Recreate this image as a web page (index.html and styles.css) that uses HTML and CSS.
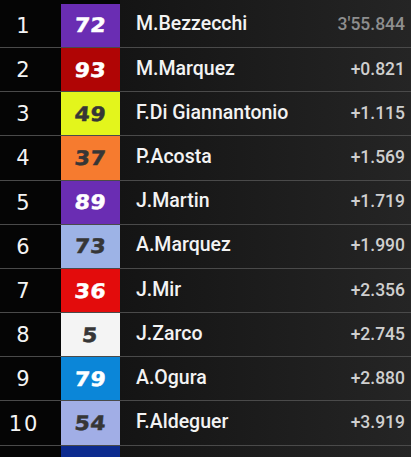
FILE: index.html
```html
<!DOCTYPE html>
<html lang="en">
<head>
<meta charset="utf-8">
<title>Race results</title>
<link rel="stylesheet" href="styles.css">
</head>
<body>
<ol class="standings">
  <li class="row"><span class="pos">1</span><span class="num c-purple"><b>72</b></span><span class="rider">M.Bezzecchi</span><span class="gap gap-lead">3'55.844</span></li>
  <li class="row"><span class="pos">2</span><span class="num c-darkred"><b>93</b></span><span class="rider">M.Marquez</span><span class="gap">+0.821</span></li>
  <li class="row"><span class="pos">3</span><span class="num c-yellow"><b>49</b></span><span class="rider">F.Di Giannantonio</span><span class="gap">+1.115</span></li>
  <li class="row"><span class="pos">4</span><span class="num c-orange"><b>37</b></span><span class="rider">P.Acosta</span><span class="gap">+1.569</span></li>
  <li class="row"><span class="pos">5</span><span class="num c-purple"><b>89</b></span><span class="rider">J.Martin</span><span class="gap">+1.719</span></li>
  <li class="row"><span class="pos">6</span><span class="num c-skyblue"><b>73</b></span><span class="rider">A.Marquez</span><span class="gap">+1.990</span></li>
  <li class="row"><span class="pos">7</span><span class="num c-red"><b>36</b></span><span class="rider">J.Mir</span><span class="gap">+2.356</span></li>
  <li class="row"><span class="pos">8</span><span class="num c-white"><b>5</b></span><span class="rider">J.Zarco</span><span class="gap">+2.745</span></li>
  <li class="row"><span class="pos">9</span><span class="num c-blue"><b>79</b></span><span class="rider">A.Ogura</span><span class="gap">+2.880</span></li>
  <li class="row"><span class="pos">10</span><span class="num c-lavender"><b>54</b></span><span class="rider">F.Aldeguer</span><span class="gap">+3.919</span></li>
  <li class="row row-cut"><span class="pos"></span><span class="num c-navy"></span><span class="rider"></span><span class="gap"></span></li>
</ol>
</body>
</html>
```

FILE: styles.css
```css
html, body {
  margin: 0;
  padding: 0;
}

body {
  width: 411px;
  height: 457px;
  overflow: hidden;
  background: linear-gradient(to right, #050505 0, #050505 120px, #141414 120px, #252525 100%);
}

.standings {
  list-style: none;
  margin: 0;
  padding: 3.8px 0 0;
}

.row {
  display: grid;
  grid-template-columns: 61px 59px 1fr auto;
  align-items: stretch;
  height: 44.2px;
  box-sizing: border-box;
  border-bottom: 1px solid #4a4a4a;
}

.row-cut {
  height: 11px;
  border-bottom: 0;
}

.pos {
  display: flex;
  align-items: center;
  justify-content: center;
  padding-right: 13px;
  padding-top: 1px;
  font-family: "DejaVu Sans", sans-serif;
  font-weight: normal;
  font-size: 21px;
  letter-spacing: 2px;
  color: #f4f4f4;
}

.num {
  display: flex;
  align-items: center;
  justify-content: center;
  font-family: "DejaVu Sans", sans-serif;
  font-size: 20px;
  color: #ffffff;
}

.num b {
  font-weight: bold;
  letter-spacing: 0.5px;
  -webkit-text-stroke: 0.5px currentColor;
  transform: scaleX(1.1) skewX(-5deg);
}

.c-purple   { background: #6a2db3; color: #ffffff; }
.c-darkred  { background: #b00505; color: #ffffff; }
.c-yellow   { background: #e3f51c; color: #363636; }
.c-orange   { background: #f67b2f; color: #363636; }
.c-skyblue  { background: #9db3e6; color: #363636; }
.c-red      { background: #e30c0c; color: #ffffff; }
.c-white    { background: #f4f4f4; color: #363636; }
.c-blue     { background: #0b86d8; color: #ffffff; }
.c-lavender { background: #a1aee6; color: #363636; }
.c-navy     { background: #0b2a8e; color: #ffffff; }

.rider {
  display: flex;
  align-items: center;
  padding-left: 16px;
  padding-bottom: 3px;
  font-family: Roboto, sans-serif;
  font-weight: 500;
  font-size: 19.5px;
  color: #f3f3f3;
  white-space: nowrap;
}

.gap {
  display: flex;
  align-items: center;
  justify-content: flex-end;
  padding-right: 6px;
  padding-bottom: 2px;
  font-family: Roboto, sans-serif;
  font-weight: 500;
  font-size: 17.5px;
  color: #cfcfcf;
}

.gap-lead {
  color: #8e8e8e;
}
```
